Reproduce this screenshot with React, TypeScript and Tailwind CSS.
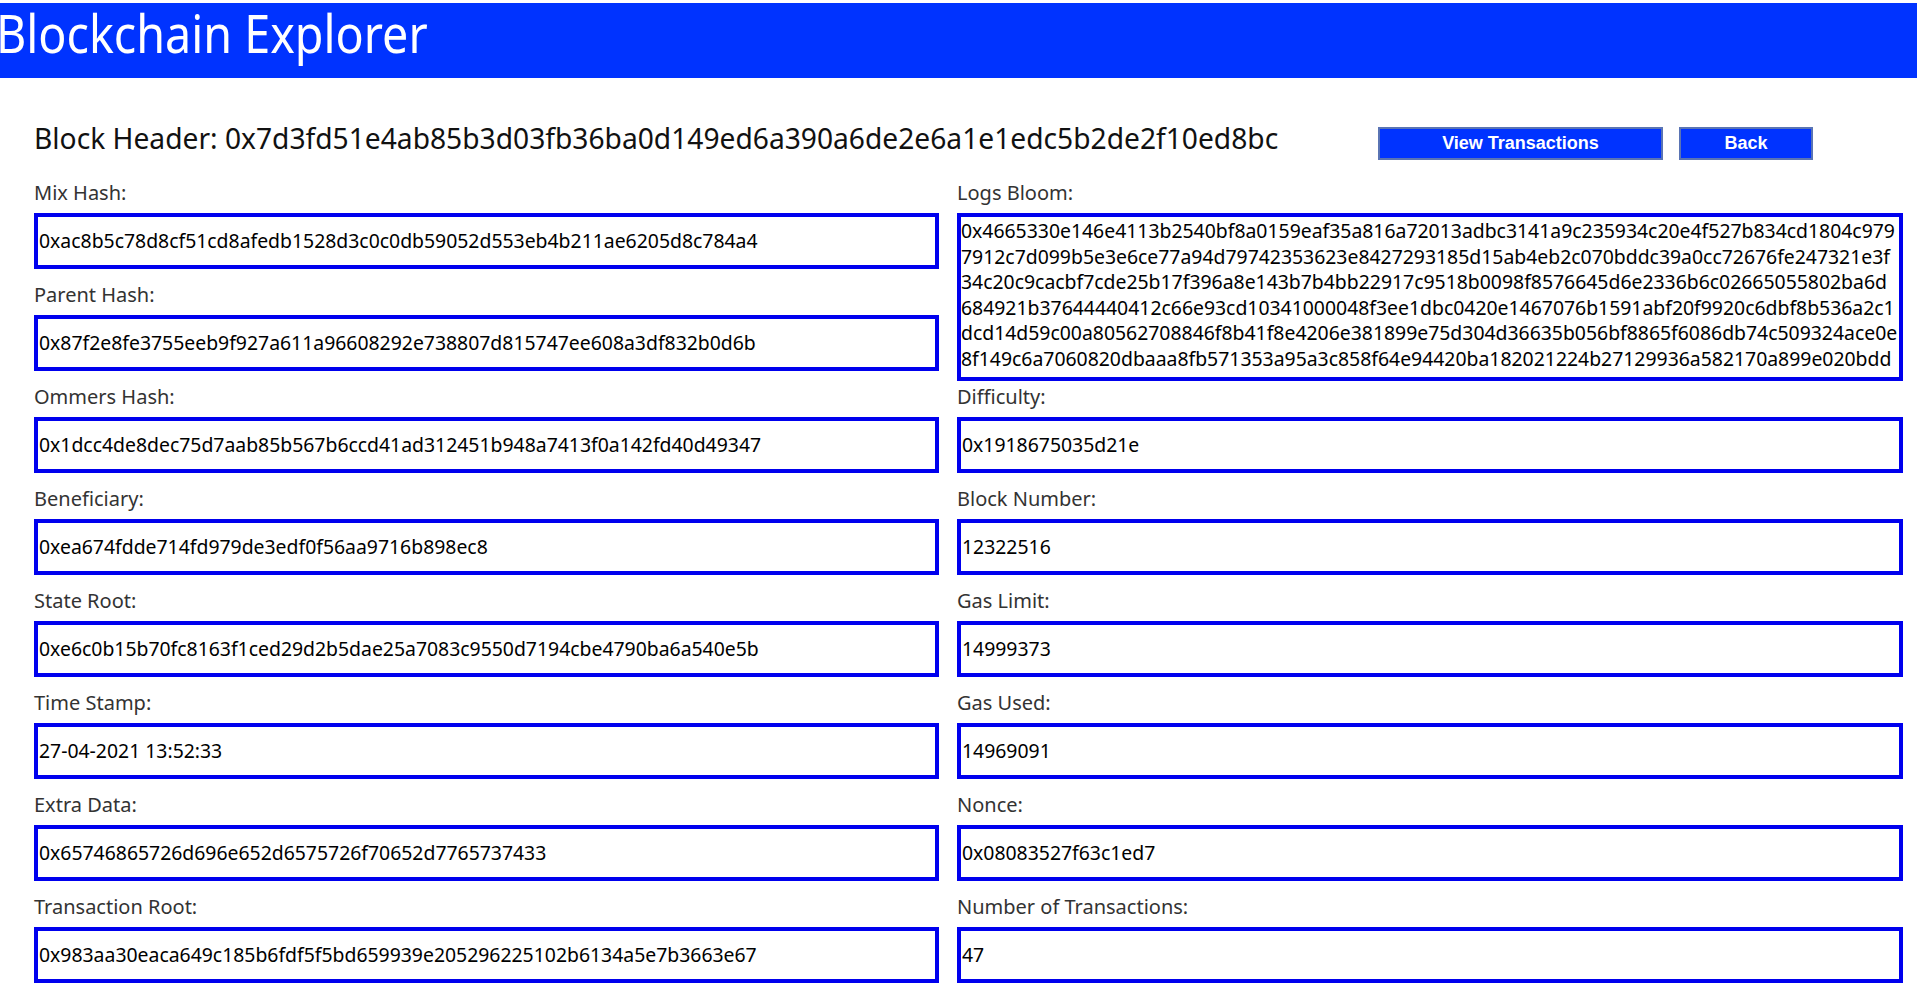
import React from 'react';

const leftFields: [string, string][] = [
  ['Mix Hash:', '0xac8b5c78d8cf51cd8afedb1528d3c0c0db59052d553eb4b211ae6205d8c784a4'],
  ['Parent Hash:', '0x87f2e8fe3755eeb9f927a611a96608292e738807d815747ee608a3df832b0d6b'],
  ['Ommers Hash:', '0x1dcc4de8dec75d7aab85b567b6ccd41ad312451b948a7413f0a142fd40d49347'],
  ['Beneficiary:', '0xea674fdde714fd979de3edf0f56aa9716b898ec8'],
  ['State Root:', '0xe6c0b15b70fc8163f1ced29d2b5dae25a7083c9550d7194cbe4790ba6a540e5b'],
  ['Time Stamp:', '27-04-2021 13:52:33'],
  ['Extra Data:', '0x65746865726d696e652d6575726f70652d7765737433'],
  ['Transaction Root:', '0x983aa30eaca649c185b6fdf5f5bd659939e205296225102b6134a5e7b3663e67'],
];

const rightFields: [string, string][] = [
  ['Difficulty:', '0x1918675035d21e'],
  ['Block Number:', '12322516'],
  ['Gas Limit:', '14999373'],
  ['Gas Used:', '14969091'],
  ['Nonce:', '0x08083527f63c1ed7'],
  ['Number of Transactions:', '47'],
];

const bloomLines = [
  '0x4665330e146e4113b2540bf8a0159eaf35a816a72013adbc3141a9c235934c20e4f527b834cd1804c979',
  '7912c7d099b5e3e6ce77a94d79742353623e8427293185d15ab4eb2c070bddc39a0cc72676fe247321e3f',
  '34c20c9cacbf7cde25b17f396a8e143b7b4bb22917c9518b0098f8576645d6e2336b6c02665055802ba6d',
  '684921b37644440412c66e93cd10341000048f3ee1dbc0420e1467076b1591abf20f9920c6dbf8b536a2c1',
  'dcd14d59c00a80562708846f8b41f8e4206e381899e75d304d36635b056bf8865f6086db74c509324ace0e',
  '8f149c6a7060820dbaaa8fb571353a95a3c858f64e94420ba182021224b27129936a582170a899e020bdd',
  '8',
];

const Field: React.FC<{ label: string; value: string }> = ({ label, value }) => (
  <div className="h-[102px]">
    <div className="text-[20px] leading-[27px] text-[#333]">{label}</div>
    <div className="mt-[7px] h-[56px] border-4 border-[#0000ee] flex items-center px-[1px] text-[19.4px] text-black whitespace-nowrap overflow-hidden">
      {value}
    </div>
  </div>
);

const App: React.FC = () => {
  return (
    <div className="min-h-screen bg-white font-['Noto_Sans',sans-serif]">
      <div className="pt-[3px]">
        <header className="h-[75px] bg-[#0033ff] overflow-hidden">
          <h1 className="ml-[-4px] origin-left scale-x-[0.88] text-[53px] leading-[59px] text-white whitespace-nowrap">
            Blockchain Explorer
          </h1>
        </header>
      </div>

      <div className="pl-[34px]">
        <div className="mt-[41px] h-[60px] flex items-start">
          <h2 className="w-[1344px] text-[28.2px] leading-[38px] text-[#111] whitespace-nowrap">
            Block Header: 0x7d3fd51e4ab85b3d03fb36ba0d149ed6a390a6de2e6a1e1edc5b2de2f10ed8bc
          </h2>
          <div className="mt-[8px] flex gap-[16px] font-['Liberation_Sans',Arial,sans-serif]">
            <button className="w-[285px] h-[33px] bg-[#0033ff] border-2 border-[#5a74b4] text-white text-[18px] font-bold">
              View Transactions
            </button>
            <button className="w-[134px] h-[33px] bg-[#0033ff] border-2 border-[#5a74b4] text-white text-[18px] font-bold">
              Back
            </button>
          </div>
        </div>

        <div className="flex gap-[18px]">
          <div className="w-[905px] flex flex-col">
            {leftFields.map(([label, value]) => (
              <Field key={label} label={label} value={value} />
            ))}
          </div>
          <div className="w-[946px] flex flex-col">
            <div className="h-[204px]">
              <div className="text-[20px] leading-[27px] text-[#333]">Logs Bloom:</div>
              <div className="mt-[7px] h-[168px] border-4 border-[#0000ee] overflow-hidden pt-[1px] text-[19.4px] leading-[25.5px] text-black">
                {bloomLines.map((line, i) => (
                  <div key={i} className="whitespace-nowrap">{line}</div>
                ))}
              </div>
            </div>
            {rightFields.map(([label, value]) => (
              <Field key={label} label={label} value={value} />
            ))}
          </div>
        </div>
      </div>
    </div>
  );
};

export default App;
